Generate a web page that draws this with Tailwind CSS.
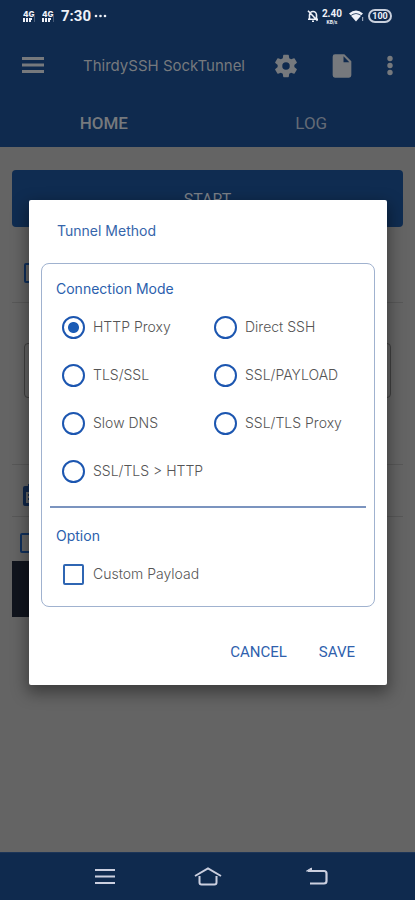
<!DOCTYPE html>
<html lang="en">
<head>
<meta charset="utf-8">
<meta name="viewport" content="width=device-width, initial-scale=1">
<title>ThirdySSH SockTunnel</title>
<script src="https://cdn.jsdelivr.net/npm/@tailwindcss/browser@4"></script>
</head>
<body class="bg-[#646464] font-['Inter',sans-serif]">
<div class="relative flex min-h-screen flex-col overflow-hidden">
  <header class="bg-[#0f2a4e] text-[#76797d]">
    <!-- status bar -->
    <div class="flex h-8 items-center justify-between pl-[23px] pr-[23px] text-[#eef1f8]">
      <div class="flex items-center gap-[3px]">
        <svg class="h-4 w-4" viewBox="0 0 16 16" fill="currentColor" aria-hidden="true"><text x="0" y="9" font-size="8" font-weight="800">4G</text><path d="M0 10h2v4H0zM3 10h2v4H3zM6 10h3v2H8v2H6z"/><path d="M11 8h1v6h-1z" opacity=".25"/></svg>
        <svg class="h-4 w-4" viewBox="0 0 16 16" fill="currentColor" aria-hidden="true"><text x="0" y="9" font-size="8" font-weight="800">4G</text><path d="M0 10h2v4H0zM3 10h2v4H3zM6 10h3v2H8v2H6z"/><path d="M11 8h1v6h-1z" opacity=".25"/></svg>
        <span class="font-['Roboto',sans-serif] text-[15px] font-bold leading-4">7:30</span>
        <svg class="h-3 w-4" viewBox="0 0 16 12" fill="currentColor" aria-hidden="true"><circle cx="2" cy="6" r="1.300"/><circle cx="6.500" cy="6" r="1.300"/><circle cx="11" cy="6" r="1.300"/></svg>
      </div>
      <div class="flex items-center gap-[3px]">
        <svg class="h-3 w-3" viewBox="0 0 12 12" fill="none" stroke="currentColor" stroke-width="1.600" aria-hidden="true"><path d="M2.500 9V5a3.500 3.500 0 0 1 7 0v4M1 9.300h10M5 11.200h2M1 .8l9.500 10"/></svg>
        <div class="flex flex-col items-center font-['Roboto',sans-serif] font-bold"><span class="text-[10px] leading-[11px]">2.40</span><span class="text-[5px] leading-[6px]">KB/s</span></div>
        <svg class="ml-1 h-3 w-4" viewBox="0 0 16 12" fill="currentColor" aria-hidden="true"><path d="M0 3.500Q7-2.500 14 3.500L12.300 5.300Q7 1 1.700 5.300z"/><path d="M2 5.800Q7 2 12 5.800L7 11.500z"/><path d="M13 7h1.200v4H13z" opacity=".6"/></svg>
        <div class="flex h-[14px] w-6 items-center justify-center rounded-full border-2 border-[#c9d0dd] font-['Roboto',sans-serif] text-[9px] font-bold leading-none">100</div>
      </div>
    </div>
    <!-- app bar -->
    <div class="flex h-[68px] items-center pl-[21px] pr-[13px]">
      <button aria-label="Menu" class="h-6 w-6"><svg viewBox="0 0 24 24" fill="currentColor"><path d="M1 3h22v3H1zM1 9.500h22v3H1zM1 16h22v3H1z"/></svg></button>
      <h1 class="ml-[38px] flex-1 whitespace-nowrap text-[15px]">ThirdySSH SockTunnel</h1>
      <div class="flex items-center gap-7">
        <button aria-label="Settings" class="h-7 w-7"><svg viewBox="0 0 24 24" fill="currentColor"><path d="M19.140 12.940c.04-.3.06-.61.06-.94 0-.32-.02-.64-.07-.94l2.030-1.580c.18-.14.23-.41.12-.61l-1.920-3.320c-.12-.22-.37-.29-.59-.22l-2.390.96c-.5-.38-1.030-.7-1.620-.94l-.36-2.540c-.04-.24-.24-.41-.48-.41h-3.840c-.24 0-.43.17-.47.41l-.36 2.540c-.59.24-1.130.57-1.620.94l-2.390-.96c-.22-.08-.47 0-.59.22L2.740 8.870c-.12.21-.08.47.12.61l2.030 1.580c-.05.3-.09.63-.09.94s.02.64.07.94l-2.030 1.580c-.18.14-.23.41-.12.61l1.920 3.320c.12.22.37.29.59.22l2.390-.96c.5.38 1.030.7 1.620.94l.36 2.540c.05.24.24.41.48.41h3.840c.24 0 .44-.17.47-.41l.36-2.540c.59-.24 1.130-.56 1.620-.94l2.390.96c.22.08.47 0 .59-.22l1.920-3.320c.12-.22.07-.47-.12-.61l-2.010-1.580zM12 15.200a3.200 3.200 0 1 1 0-6.400 3.200 3.200 0 0 1 0 6.400z"/></svg></button>
        <button aria-label="Configuration file" class="h-7 w-7"><svg viewBox="0 0 24 24" fill="currentColor"><path fill-rule="evenodd" d="M6 2h8l6 6v12a2 2 0 0 1-2 2H6a2 2 0 0 1-2-2V4a2 2 0 0 1 2-2zM13.300 3.700V8.700h5z"/></svg></button>
        <button aria-label="More options" class="-ml-1.5 h-6 w-6"><svg viewBox="0 0 24 24" fill="currentColor"><circle cx="12" cy="4.500" r="2.700"/><circle cx="12" cy="11.500" r="2.700"/><circle cx="12" cy="18.500" r="2.700"/></svg></button>
      </div>
    </div>
    <nav class="grid h-[47px] grid-cols-2 text-center font-['Roboto',sans-serif] text-[17px] leading-[46px]">
      <a href="#home" class="font-medium">HOME</a>
      <a href="#log" class="text-[#646b76]">LOG</a>
    </nav>
  </header>

  <main class="flex-1 px-3 pt-[23px]" aria-hidden="true">
    <button class="block h-[57px] w-full rounded bg-[#0f2c51] pt-0.5 font-['Roboto',sans-serif] text-base text-[#7b8087]" tabindex="-1">START</button>
    <div class="flex h-[76px] items-center border-b border-[#585858] px-3 pt-4"><div class="h-5 w-5 rounded-xs border-2 border-[#10305c]"></div></div>
    <div class="h-[162px] border-b border-[#585858] px-3 pt-10"><div class="h-[55px] rounded border border-[#404040]"></div></div>
    <div class="flex h-[52px] items-center border-b border-[#585858] px-[10px] pt-2">
      <svg class="h-6 w-6 text-[#10274a]" viewBox="0 0 24 24" fill="currentColor"><path fill-rule="evenodd" d="M4 3h2V1h3v2h6V1h3v2h2a2 2 0 0 1 2 2v16a2 2 0 0 1-2 2H3a2 2 0 0 1-2-2V5a2 2 0 0 1 2-2zM4 9v11h15V9z"/><path d="M6 11h9v2H6zM6 15h9v2H6z"/></svg>
    </div>
    <div class="flex h-11 items-center px-2 pt-4 pb-2"><div class="h-5 w-5 shrink-0 rounded-xs border-2 border-[#10305c]"></div></div>
    <div class="h-14 w-1/2 bg-[#10141d]"></div>
  </main>

  <nav class="flex h-12 items-center justify-center border-t border-[#1c3558] bg-[#0f2a4e] pl-1.5 text-[#cbcfdf]">
    <button aria-label="Recent apps" class="mr-[77px] h-6 w-6"><svg viewBox="0 0 24 24" fill="none" stroke="currentColor" stroke-width="2"><path d="M2 5h20M2 11.500h20M2 18h20"/></svg></button>
    <button aria-label="Home" class="h-6 w-7"><svg viewBox="0 0 28 24" fill="none" stroke="currentColor" stroke-width="2"><path d="M1 11L14 3.500 27 11M5.500 11v6.500a2 2 0 0 0 2 2h13a2 2 0 0 0 2-2V11"/></svg></button>
    <button aria-label="Back" class="ml-[83px] h-6 w-6"><svg viewBox="0 0 24 24" fill="none" stroke="currentColor" stroke-width="2.200"><path d="M3 6h16q2.500 0 2.500 2.500V16q0 2.500-2.500 2.500H5"/><path d="M1.500 6l5-3v3z" fill="currentColor" stroke-width="1"/></svg></button>
  </nav>

  <!-- dialog over the dimmed page -->
  <div role="dialog" aria-modal="true" aria-labelledby="dialog-title" class="absolute right-7 left-[29px] top-[200px] rounded-xs bg-white px-3 pb-3 text-sm text-[#555] shadow-[0_6px_16px_2px_rgba(0,0,0,0.4)]">
    <h2 id="dialog-title" class="px-4 pt-5 pb-[21px] leading-[22px] text-[#3565ab]">Tunnel Method</h2>
    <form>
      <div class="rounded-lg border border-[#a0b2cf] px-2 pb-2">
        <div role="radiogroup" aria-labelledby="mode-title">
          <h3 id="mode-title" class="px-1.5 pt-[15px] pb-1 leading-[20px] text-[#2b60ad]">Connection Mode</h3>
          <div class="grid grid-cols-2 pr-3 font-light *:flex *:h-12 *:items-center *:gap-2 *:pl-3">
            <label><input type="radio" name="mode" checked class="h-[23px] w-[23px] shrink-0 appearance-none rounded-full border-2 border-[#1c56b0] checked:bg-[radial-gradient(circle,#1c5cb5_5px,transparent_6px)]">HTTP Proxy</label>
            <label><input type="radio" name="mode" class="h-[23px] w-[23px] shrink-0 appearance-none rounded-full border-2 border-[#1c56b0] checked:bg-[radial-gradient(circle,#1c5cb5_5px,transparent_6px)]">Direct SSH</label>
            <label><input type="radio" name="mode" class="h-[23px] w-[23px] shrink-0 appearance-none rounded-full border-2 border-[#1c56b0] checked:bg-[radial-gradient(circle,#1c5cb5_5px,transparent_6px)]">TLS/SSL</label>
            <label><input type="radio" name="mode" class="h-[23px] w-[23px] shrink-0 appearance-none rounded-full border-2 border-[#1c56b0] checked:bg-[radial-gradient(circle,#1c5cb5_5px,transparent_6px)]">SSL/PAYLOAD</label>
            <label><input type="radio" name="mode" class="h-[23px] w-[23px] shrink-0 appearance-none rounded-full border-2 border-[#1c56b0] checked:bg-[radial-gradient(circle,#1c5cb5_5px,transparent_6px)]">Slow DNS</label>
            <label><input type="radio" name="mode" class="h-[23px] w-[23px] shrink-0 appearance-none rounded-full border-2 border-[#1c56b0] checked:bg-[radial-gradient(circle,#1c5cb5_5px,transparent_6px)]">SSL/TLS Proxy</label>
            <label class="whitespace-nowrap"><input type="radio" name="mode" class="h-[23px] w-[23px] shrink-0 appearance-none rounded-full border-2 border-[#1c56b0] checked:bg-[radial-gradient(circle,#1c5cb5_5px,transparent_6px)]">SSL/TLS &gt; HTTP</label>
          </div>
        </div>
        <hr class="mt-[11px] border-t-2 border-[#7b94bf]">
        <h3 class="px-1.5 pt-[18px] pb-1 leading-[20px] text-[#2b60ad]">Option</h3>
        <label class="flex h-12 items-center gap-[9px] pl-[13px]"><input type="checkbox" class="h-[21px] w-[21px] shrink-0 appearance-none rounded-xs border-2 border-[#2f66b3] checked:bg-[#2f66b3]"><span class="font-light">Custom Payload</span></label>
      </div>
      <div class="mt-[26px] flex justify-end gap-4 pr-3 font-['Roboto',sans-serif] text-[15px] text-[#2f61ad]">
        <button type="button" class="h-10 px-2">CANCEL</button>
        <button type="button" class="h-10 px-2">SAVE</button>
      </div>
    </form>
  </div>
</div>
</body>
</html>
